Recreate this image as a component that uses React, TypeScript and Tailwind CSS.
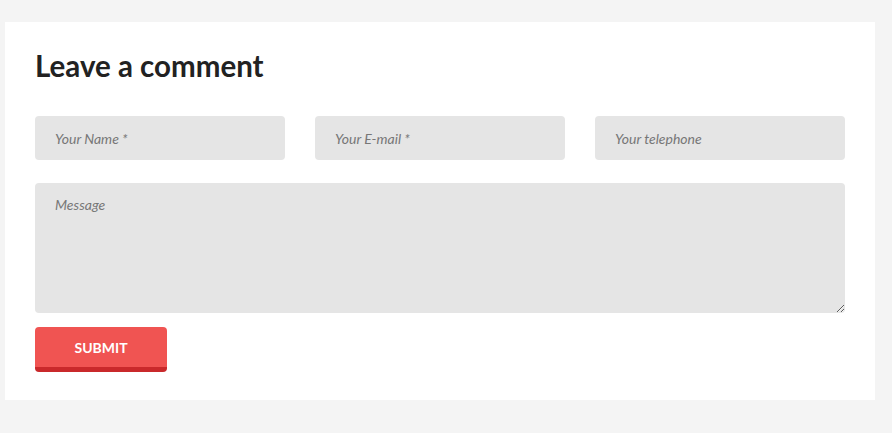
import React from "react";

export default function App() {
  const font = { fontFamily: '"Lato", "Noto Sans", sans-serif' };
  const inputCls =
    "h-[44px] w-full rounded-[4px] bg-[#e5e5e5] px-[20px] text-[14px] text-[#444] outline-none placeholder:italic placeholder:text-[#777]";
  return (
    <div className="min-h-[433px] w-[892px] bg-[#f4f4f4] pt-[22px]" style={font}>
      <div className="ml-[5px] w-[870px] bg-white px-[30px] pt-[25px] pb-[28px]">
        <h2 className="text-[29.5px] font-bold leading-[37px] text-[#222]">
          Leave a comment
        </h2>
        <form className="mt-[32px] flex flex-col" onSubmit={(e) => e.preventDefault()}>
          <div className="grid grid-cols-3 gap-[30px]">
            <input className={inputCls} placeholder="Your Name *" />
            <input className={inputCls} placeholder="Your E-mail *" />
            <input className={inputCls} placeholder="Your telephone" />
          </div>
          <textarea
            className="mt-[23px] block h-[130px] w-full rounded-[4px] bg-[#e5e5e5] px-[20px] pt-[12px] text-[14px] leading-[20px] text-[#444] outline-none placeholder:italic placeholder:text-[#777]"
            placeholder="Message"
          />
          <div className="mt-[14px]">
            <button
              type="submit"
              className="h-[45px] w-[132px] rounded-[4px] border-b-[5px] border-[#c9292b] bg-[#f05452] text-[14px] font-bold uppercase text-white"
            >
              Submit
            </button>
          </div>
        </form>
      </div>
    </div>
  );
}
